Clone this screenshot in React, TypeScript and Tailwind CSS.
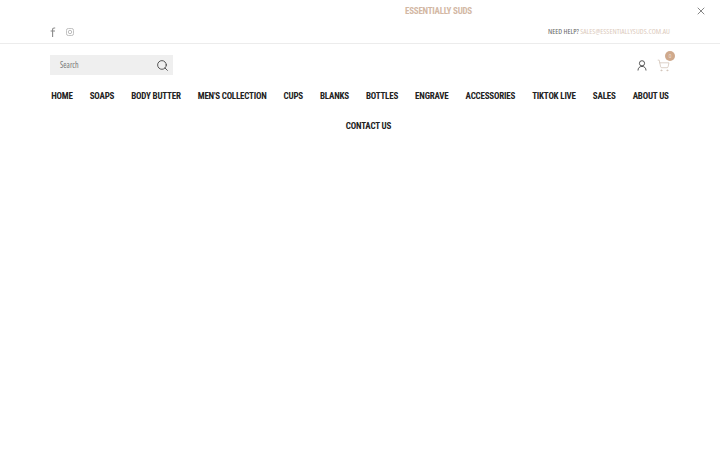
import { Search, ShoppingCart, X } from "lucide-react";

const navItems = [
  "HOME",
  "SOAPS",
  "BODY BUTTER",
  "MEN'S COLLECTION",
  "CUPS",
  "BLANKS",
  "BOTTLES",
  "ENGRAVE",
  "ACCESSORIES",
  "TIKTOK LIVE",
  "SALES",
  "ABOUT US",
  "CONTACT US",
];

function FacebookIcon() {
  return (
    <svg width="6" height="10" viewBox="0 0 6 10" fill="none" stroke="#8a8a8a" strokeWidth="1.1">
      <path d="M5.2 1H4.2C3.2 1 2.6 1.5 2.6 2.6V10M0.6 4H5" />
    </svg>
  );
}

function InstagramIcon() {
  return (
    <svg width="8" height="8" viewBox="0 0 9 9" fill="none" stroke="#a5a5a5" strokeWidth="0.8">
      <rect x="0.5" y="0.5" width="8" height="8" rx="2.2" />
      <circle cx="4.5" cy="4.5" r="1.9" />
    </svg>
  );
}

function UserIcon() {
  return (
    <svg width="10" height="11" viewBox="0 0 10 11" fill="none" stroke="#444" strokeWidth="0.9">
      <circle cx="5" cy="3.3" r="2.6" />
      <path d="M1 10.5C1 8 2.5 6.4 5 6.4S9 8 9 10.5" />
    </svg>
  );
}

export default function App() {
  return (
    <div className="min-h-[450px] w-[720px] bg-white font-['Roboto',sans-serif] font-stretch-[75%]">
      <div className="relative flex h-[23px] items-center justify-center pl-[157px]">
        <span className="text-[9px] font-bold tracking-[-0.25px] text-[#d3b8a4]">ESSENTIALLY SUDS</span>
        <button className="absolute right-[13px] top-[5px] text-[#666]">
          <X size={12} strokeWidth={1.6} />
        </button>
      </div>

      <div className="flex h-[21px] items-center justify-between border-b border-[#ececec] px-[50px] pb-[2px]">
        <div className="flex items-center gap-[10px]">
          <FacebookIcon />
          <InstagramIcon />
        </div>
        <div className="font-['Open_Sans',sans-serif] text-[7.5px] text-[#666]">
          NEED HELP? <span className="text-[#dccbbd]">SALES@ESSENTIALLYSUDS.COM.AU</span>
        </div>
      </div>

      <div className="flex items-center justify-between px-[50px] pt-[11px]">
        <div className="flex h-5 w-[123px] items-center justify-between bg-[#efefef] pl-[10px] pr-[4px]">
          <span className="font-['Open_Sans',sans-serif] text-[8px] text-[#777]">Search</span>
          <Search size={13} strokeWidth={1.5} className="text-[#333]" />
        </div>
        <div className="flex items-center gap-[10px]">
          <UserIcon />
          <div className="relative">
            <ShoppingCart size={13} strokeWidth={1.3} className="text-[#cdbdb0]" />
            <span className="absolute -right-[5px] -top-[8px] flex h-[10px] w-[10px] items-center justify-center rounded-full bg-[#cfa98c] text-[6px] text-[#eeddcf]">
              0
            </span>
          </div>
        </div>
      </div>

      <nav className="mt-[7px] flex flex-wrap justify-center px-[36px]">
        {navItems.map((item) => (
          <a
            key={item}
            className="flex h-[30px] items-center whitespace-nowrap px-[8.5px] text-[9px] font-bold tracking-[-0.2px] text-[#222] last:pl-[25.5px]"
          >
            {item}
          </a>
        ))}
      </nav>
    </div>
  );
}
